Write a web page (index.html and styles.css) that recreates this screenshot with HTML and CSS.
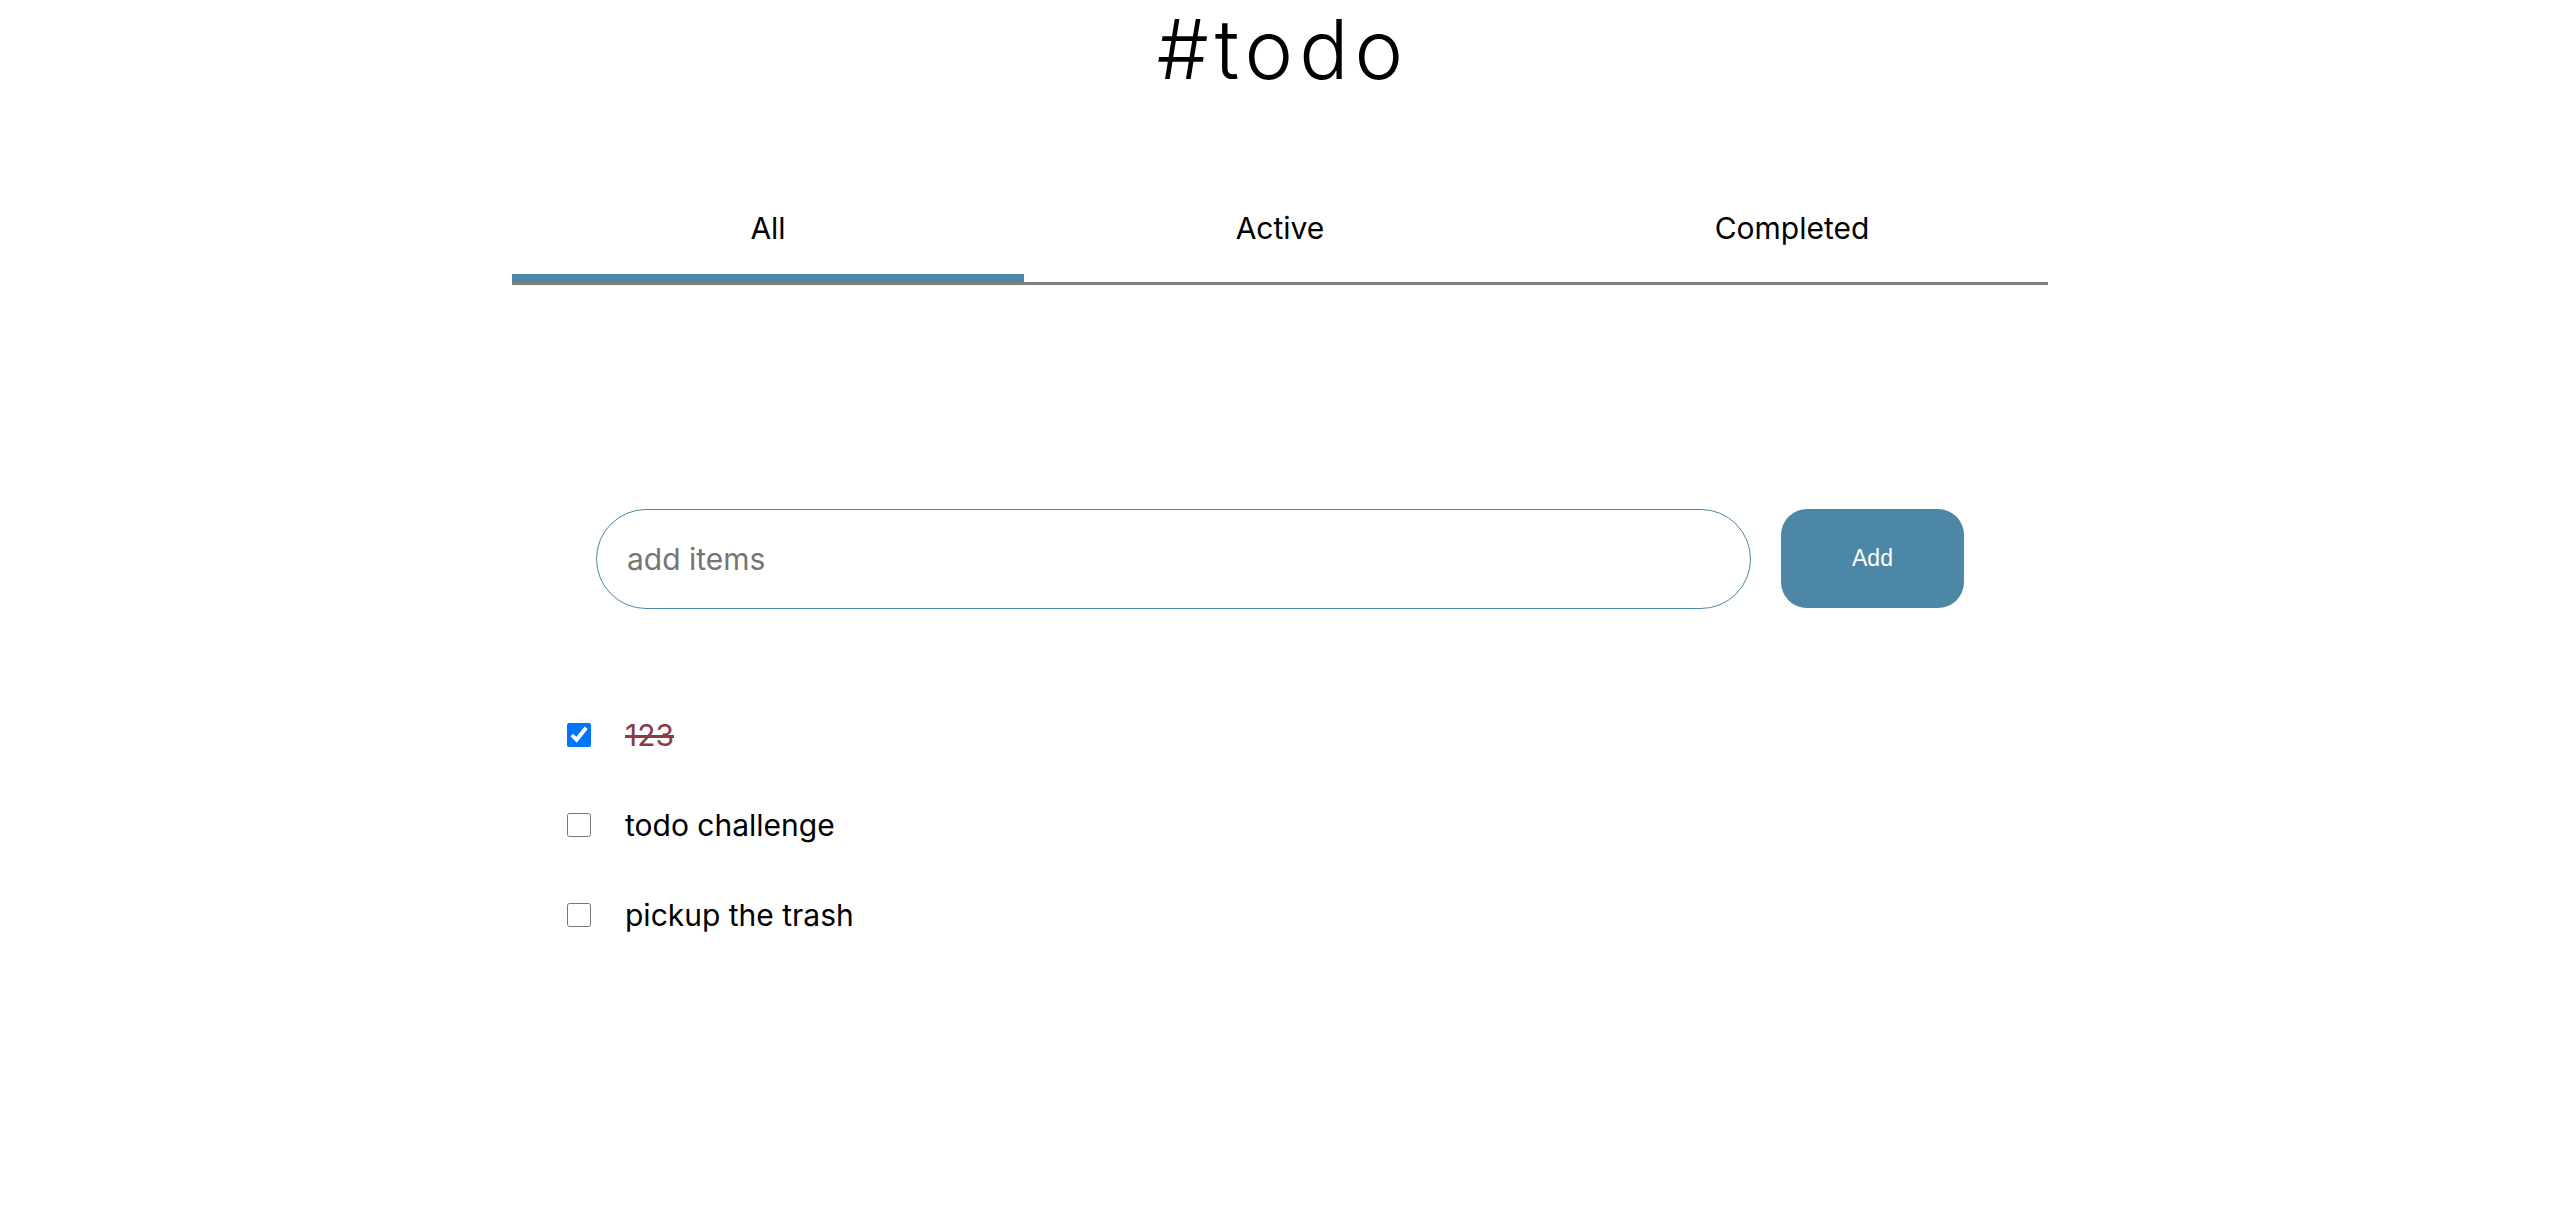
FILE: index.html
```html
<!DOCTYPE html>
<html lang="en">
<head>
<meta charset="utf-8">
<title>#todo</title>
<link rel="stylesheet" href="styles.css">
</head>
<body>
<main class="app">
  <h1 class="title">#todo</h1>
  <nav class="tabs">
    <div class="tab tab-active">All</div>
    <div class="tab">Active</div>
    <div class="tab">Completed</div>
  </nav>
  <form class="add-form">
    <input class="add-input" type="text" placeholder="add items">
    <button class="add-btn" type="button">Add</button>
  </form>
  <ul class="items">
    <li class="item item-done"><input class="check" type="checkbox" checked><span class="label">123</span></li>
    <li class="item"><input class="check" type="checkbox"><span class="label">todo challenge</span></li>
    <li class="item"><input class="check" type="checkbox"><span class="label">pickup the trash</span></li>
  </ul>
</main>
</body>
</html>
```

FILE: styles.css
```css
html, body {
  margin: 0;
  padding: 0;
  background: #ffffff;
}
body {
  font-family: "Inter", "Open Sans", sans-serif;
  color: #000;
}
.app {
  width: 60%;
  margin: 0 auto;
  display: flex;
  flex-direction: column;
}
.title {
  margin: 0;
  padding-left: 6px;
  font-size: 82px;
  line-height: normal;
  letter-spacing: 6px;
  font-weight: 300;
  text-align: center;
}
.tabs {
  display: flex;
  margin-top: 112px;
  border-bottom: 3px solid #808080;
}
.tab {
  flex: 1;
  text-align: center;
  font-size: 30px;
  line-height: 34px;
  padding-bottom: 29px;
  border-bottom: 8px solid transparent;
}
.tab-active {
  border-bottom-color: #4d87a8;
}
.add-form {
  display: flex;
  justify-content: center;
  gap: 30px;
  margin-top: 224px;
}
.add-input {
  box-sizing: border-box;
  width: 1155px;
  height: 100px;
  border: 1px solid #4d87a8;
  border-radius: 50px;
  padding: 0 30px;
  font-family: "Inter", "Open Sans", sans-serif;
  font-size: 30px;
  outline: none;
}
.add-input::placeholder {
  color: #757575;
}
.add-btn {
  width: 183px;
  height: 99px;
  border: none;
  border-radius: 26px;
  background: #4d87a8;
  color: #fff;
  font-family: "Liberation Sans", Arial, sans-serif;
  font-size: 23px;
}
.items {
  list-style: none;
  margin: 109px 0 0;
  padding: 0 0 0 55px;
  display: flex;
  flex-direction: column;
  gap: 56px;
}
.item {
  display: flex;
  align-items: center;
  gap: 34px;
  height: 34px;
  font-size: 30px;
}
.check {
  width: 24px;
  height: 24px;
  margin: 0;
}
.item-done .label {
  color: #8b3a4a;
  text-decoration: line-through;
}
```
